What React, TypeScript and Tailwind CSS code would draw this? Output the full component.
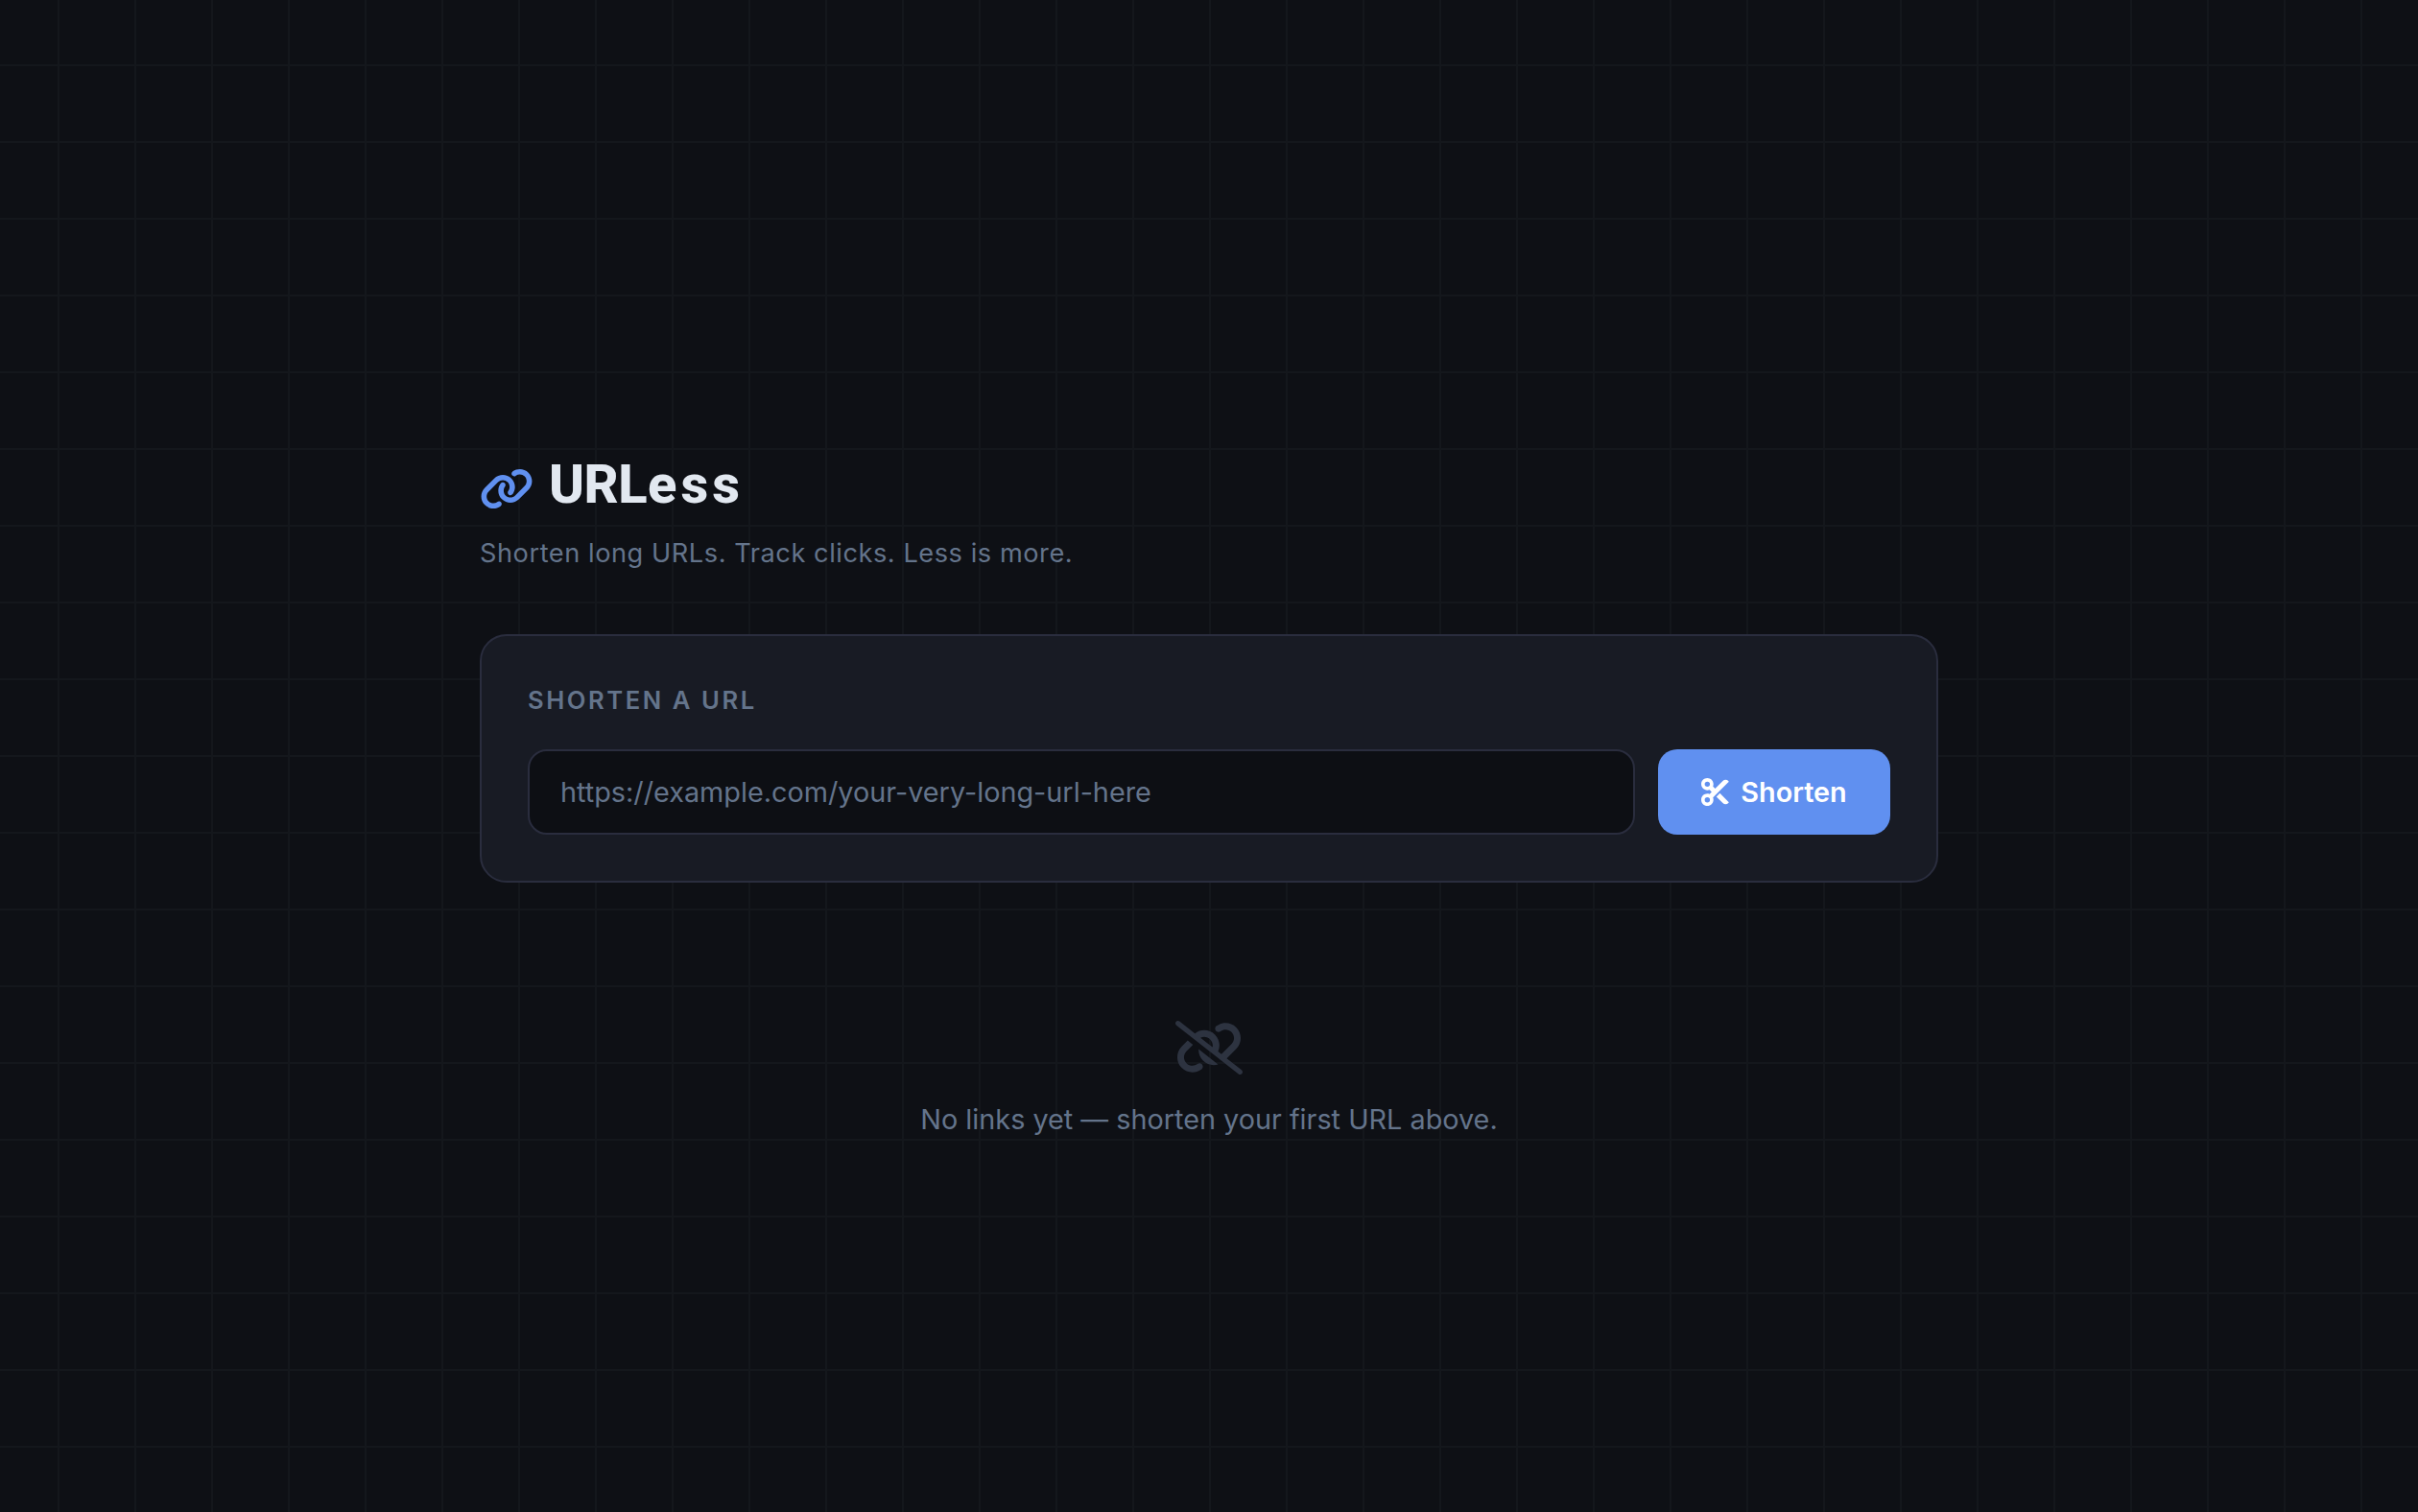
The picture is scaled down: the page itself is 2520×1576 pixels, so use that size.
import { FaLink, FaLinkSlash, FaScissors } from "react-icons/fa6";

export default function App() {
  return (
    <div className="min-h-screen flex flex-col items-center pt-[472px] bg-[#0e1015] bg-[linear-gradient(#14171c_2px,transparent_2px),linear-gradient(90deg,#14171c_2px,transparent_2px)] bg-[length:80px_80px] bg-[position:60px_67px] font-['Inter',sans-serif]">
      <div className="w-[1520px]">
        <div className="flex items-center gap-[16px] h-[64px]">
          <FaLink className="w-[56px] h-[45px] mt-[10px] text-[#6090f0]" />
          <h1 className="mt-[2px] text-[56px] leading-[64px] font-extrabold tracking-[-0.5px] text-[#e2e8f0] font-['Roboto',sans-serif]">
            URL<span className="tracking-[4px] ml-[1px]">ess</span>
          </h1>
        </div>
        <p className="mt-[21px] text-[27.2px] leading-[40px] tracking-[0.544px] text-[#64748b]">Shorten long URLs. Track clicks. Less is more.</p>
        <div className="mt-[64px] bg-[#181b24] border-2 border-[#2a2d3e] rounded-[28px] p-[48px]">
          <p className="text-[25.6px] leading-[38px] font-semibold tracking-[2.56px] text-[#64748b] uppercase">Shorten a URL</p>
          <div className="mt-[32px] flex gap-[24px]">
            <input
              placeholder="https://example.com/your-very-long-url-here"
              className="flex-1 h-[89px] px-[32px] text-[28.8px] bg-[#0d0f14] border-2 border-[#2a2d3e] rounded-[20px] text-[#e2e8f0] placeholder:text-[#64748b]"
            />
            <button className="w-[242px] h-[89px] flex items-center justify-center gap-[12px] rounded-[20px] bg-[#6090f0] text-white text-[28.8px] font-semibold">
              <FaScissors className="w-[29px] h-[29px]" />
              Shorten
            </button>
          </div>
        </div>
        <div className="mt-[144px] flex flex-col items-center">
          <FaLinkSlash className="w-[70px] h-[56px] text-[#2d3340]" />
          <p className="mt-[25px] text-[28.8px] leading-[44px] text-[#64748b]">No links yet — shorten your first URL above.</p>
        </div>
      </div>
    </div>
  );
}
